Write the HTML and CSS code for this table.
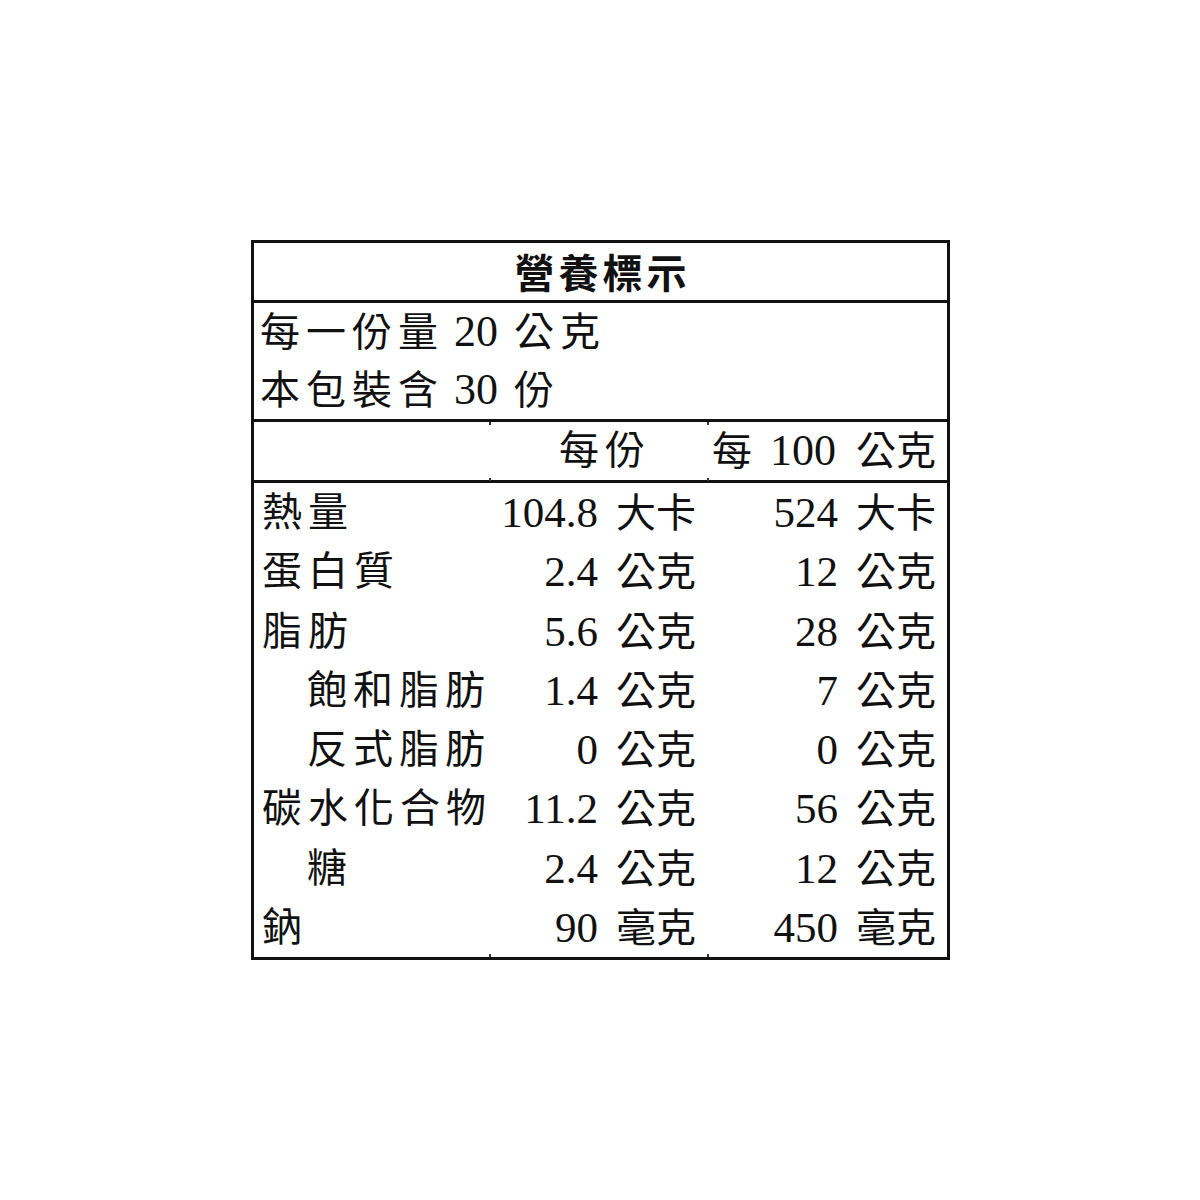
FILE: index.html
```html
<!DOCTYPE html>
<html lang="zh-Hant">
<head>
<meta charset="utf-8">
<title>營養標示</title>
<link rel="stylesheet" href="styles.css">
</head>
<body>
<div class="page">
  <div class="label">
    <div class="title">營養標示</div>
    <div class="serving">
      <div class="line">每一份量<span class="num">20</span>公克</div>
      <div class="line">本包裝含<span class="num">30</span>份</div>
    </div>
    <div class="grid head">
      <div class="c1"></div>
      <div class="c2 tk"><span class="hd2">每份</span></div>
      <div class="c3 tk">每<span class="num hn">100</span>公克</div>
    </div>
    <div class="grid body">
      <div class="c1">熱量</div><div class="c2"><span class="v">104.8</span>大卡</div><div class="c3"><span class="v">524</span>大卡</div>
      <div class="c1">蛋白質</div><div class="c2"><span class="v">2.4</span>公克</div><div class="c3"><span class="v">12</span>公克</div>
      <div class="c1">脂肪</div><div class="c2"><span class="v">5.6</span>公克</div><div class="c3"><span class="v">28</span>公克</div>
      <div class="c1 ind">飽和脂肪</div><div class="c2"><span class="v">1.4</span>公克</div><div class="c3"><span class="v">7</span>公克</div>
      <div class="c1 ind">反式脂肪</div><div class="c2"><span class="v">0</span>公克</div><div class="c3"><span class="v">0</span>公克</div>
      <div class="c1">碳水化合物</div><div class="c2"><span class="v">11.2</span>公克</div><div class="c3"><span class="v">56</span>公克</div>
      <div class="c1 ind">糖</div><div class="c2"><span class="v">2.4</span>公克</div><div class="c3"><span class="v">12</span>公克</div>
      <div class="c1">鈉</div><div class="c2 tb"><span class="v">90</span>毫克</div><div class="c3 tb"><span class="v">450</span>毫克</div>
    </div>
  </div>
</div>
</body>
</html>
```
FILE: styles.css
```css
html, body {
  margin: 0;
  padding: 0;
  background: #fff;
}
.page {
  padding: 240px 0 0 251px;
}
.label {
  width: 699px;
  box-sizing: border-box;
  border: 3px solid #111;
  color: #111;
  font-family: "Liberation Serif", "Noto Sans CJK TC", serif;
  font-size: 40px;
}
.title {
  height: 57px;
  line-height: 57px;
  text-align: center;
  font-family: "Noto Sans CJK TC", sans-serif;
  font-weight: 700;
  letter-spacing: 4px;
  text-indent: 4px;
  border-bottom: 3px solid #111;
}
.serving {
  height: 116px;
  padding-left: 6px;
  border-bottom: 3px solid #111;
}
.serving .line {
  height: 58px;
  line-height: 58px;
  letter-spacing: 6px;
  white-space: nowrap;
}
.num {
  font-size: 44px;
  letter-spacing: 0;
  margin: 0 16px 0 10px;
}
.num.hn {
  margin: 0 20px 0 18px;
}
.grid {
  display: grid;
  grid-template-columns: 236px 218px 239px;
}
.grid > div {
  position: relative;
  white-space: nowrap;
}
.head {
  height: 58px;
  line-height: 58px;
  border-bottom: 3px solid #111;
}
.body > div {
  height: 59.25px;
  line-height: 59.25px;
}
.c1 {
  padding-left: 8px;
  letter-spacing: 6px;
}
.c1.ind {
  padding-left: 53px;
}
.c2, .c3 {
  text-align: right;
}
.c2 {
  padding-right: 12px;
}
.c3 {
  padding-right: 11px;
}
.hd2 {
  letter-spacing: 6px;
  margin-right: 45px;
}
.v {
  font-size: 43px;
  margin-right: 18px;
}
.tk::before,
.tk::after,
.tb::after {
  content: "";
  position: absolute;
  left: -1px;
  width: 2px;
  height: 3px;
  background: #333;
}
.tk::before {
  top: 0;
}
.tk::after {
  bottom: 0;
}
.tb::after {
  bottom: 0;
}
```
